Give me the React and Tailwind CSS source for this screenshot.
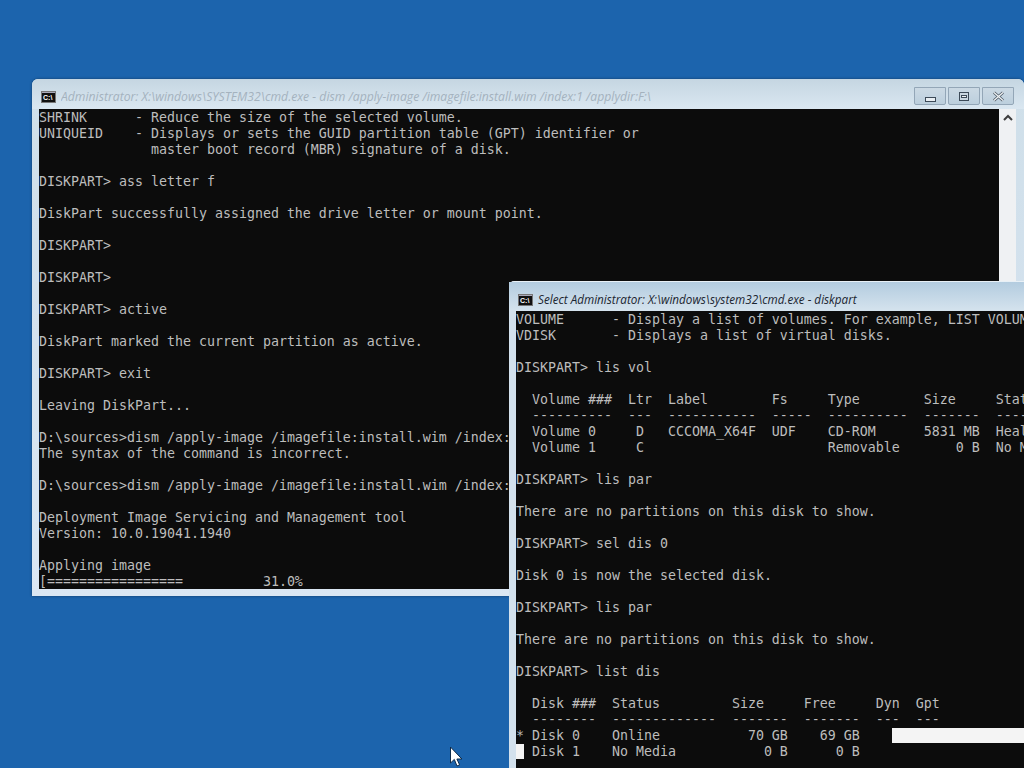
// cmd.exe windows on the Windows PE desktop
const BACK_LINES = [
  "SHRINK      - Reduce the size of the selected volume.",
  "UNIQUEID    - Displays or sets the GUID partition table (GPT) identifier or",
  "              master boot record (MBR) signature of a disk.",
  "",
  "DISKPART> ass letter f",
  "",
  "DiskPart successfully assigned the drive letter or mount point.",
  "",
  "DISKPART>",
  "",
  "DISKPART>",
  "",
  "DISKPART> active",
  "",
  "DiskPart marked the current partition as active.",
  "",
  "DISKPART> exit",
  "",
  "Leaving DiskPart...",
  "",
  "D:\\sources>dism /apply-image /imagefile:install.wim /index:",
  "The syntax of the command is incorrect.",
  "",
  "D:\\sources>dism /apply-image /imagefile:install.wim /index:",
  "",
  "Deployment Image Servicing and Management tool",
  "Version: 10.0.19041.1940",
  "",
  "Applying image",
  "[=================          31.0%",
];

const FRONT_LINES = [
  "VOLUME      - Display a list of volumes. For example, LIST VOLUME.",
  "VDISK       - Displays a list of virtual disks.",
  "",
  "DISKPART> lis vol",
  "",
  "  Volume ###  Ltr  Label        Fs     Type        Size     Status     Info",
  "  ----------  ---  -----------  -----  ----------  -------  ---------  --------",
  "  Volume 0     D   CCCOMA_X64F  UDF    CD-ROM      5831 MB  Healthy",
  "  Volume 1     C                       Removable       0 B  No Media",
  "",
  "DISKPART> lis par",
  "",
  "There are no partitions on this disk to show.",
  "",
  "DISKPART> sel dis 0",
  "",
  "Disk 0 is now the selected disk.",
  "",
  "DISKPART> lis par",
  "",
  "There are no partitions on this disk to show.",
  "",
  "DISKPART> list dis",
  "",
  "  Disk ###  Status         Size     Free     Dyn  Gpt",
  "  --------  -------------  -------  -------  ---  ---",
];

const CmdIcon = () => (
  <div className="flex h-[12px] w-[15px] shrink-0 flex-col bg-[#111] border border-[#777]">
    <div className="h-[2px] bg-[#aab]" />
    <span className="font-['Liberation_Sans',sans-serif] text-[7px] leading-[9px] font-bold text-white pl-[1px]">C:\</span>
  </div>
);

const Console = ({ children }) => (
  <pre className="pt-[1px] font-['DejaVu_Sans_Mono',monospace] text-[13.29px] leading-4 text-[#bdbdbd] whitespace-pre">
    {children}
  </pre>
);

const CaptionButton = ({ children }) => (
  <div className="flex h-[18px] w-[32px] items-center justify-center rounded-b-[2px] border border-[#93a6b7] bg-gradient-to-b from-[#cbd9e4] to-[#bccfdd]">
    {children}
  </div>
);

const App = () => (
  <div className="relative h-[768px] w-[1024px] overflow-hidden bg-[#1c64ad]">
    {/* back window */}
    <div className="absolute left-[32px] top-[79px] flex h-[517px] w-[992px] flex-col rounded-t-[6px] bg-gradient-to-b from-[#cfdfe9] via-[#d4e2ee] to-[#dbe7f3] shadow-[0_0_3px_rgba(0,0,0,0.4)]">
      <div className="flex h-[30px] items-center pl-[9px] pr-[10px] pt-[6px] bg-gradient-to-b from-[#c5d6e2] to-[#dae7f1] rounded-t-[6px]">
        <CmdIcon />
        <span className="ml-[5px] flex-1 truncate font-['Open_Sans',sans-serif] text-[12.2px] italic text-[#a4b2be]">
          Administrator: X:\windows\SYSTEM32\cmd.exe - dism /apply-image /imagefile:install.wim /index:1 /applydir:F:\
        </span>
        <div className="-mt-[2px] flex gap-[2px]">
          <CaptionButton>
            <div className="mt-[7px] h-[5px] w-[11px] border border-[#3c4a58] bg-[#e8eef3]" />
          </CaptionButton>
          <CaptionButton>
            <div className="flex h-[9px] w-[10px] items-center justify-center border border-[#3c4a58] bg-[#c9d6e0]">
              <div className="h-[3px] w-[6px] border border-[#3c4a58] bg-[#eef2f5]" />
            </div>
          </CaptionButton>
          <CaptionButton>
            <svg width="13" height="11" viewBox="0 0 13 11">
              <path d="M2 1.5 11 9.5M11 1.5 2 9.5" stroke="#4b5763" strokeWidth="3" />
              <path d="M2 1.5 11 9.5M11 1.5 2 9.5" stroke="#eef2f5" strokeWidth="1.4" />
            </svg>
          </CaptionButton>
        </div>
      </div>
      <div className="flex h-[480px] pl-[7px] pr-[8px]">
        <div className="flex-1 overflow-hidden bg-[#0c0c0c]">
          <Console>{BACK_LINES.join("\n")}</Console>
        </div>
        <div className="flex w-[17px] justify-center bg-[#eff1f3] pt-[5px]">
          <svg width="10" height="7" viewBox="0 0 10 7">
            <path d="M1 6 5 2l4 4" fill="none" stroke="#3d3d3d" strokeWidth="2" />
          </svg>
        </div>
      </div>
    </div>

    {/* front window, runs off the right and bottom edge */}
    <div className="absolute left-[509px] top-[281px] flex h-[487px] w-[515px] flex-col rounded-tl-[5px] border-t border-[#e8f0f6] bg-[#d3e1ed]">
      <div className="flex h-[29px] items-center pl-[9px] pt-[6px] bg-gradient-to-b from-[#b3ccdf] to-[#d5e3ee]">
        <CmdIcon />
        <span className="ml-[5px] font-['Open_Sans',sans-serif] text-[11.7px] italic text-[#1b2530]">
          Select Administrator: X:\windows\system32\cmd.exe - diskpart
        </span>
      </div>
      <div className="flex-1 overflow-hidden bg-[#0c0c0c] ml-[7px]">
        <Console>
          {FRONT_LINES.join("\n")}
          {"\n* Disk 0    Online           70 GB    69 GB    "}
          <span className="bg-[#f4f4f4]">{" ".repeat(20)}</span>
          {"\n"}
          <span className="bg-[#f4f4f4]"> </span>
          {" Disk 1    No Media           0 B      0 B"}
        </Console>
      </div>
    </div>

    {/* mouse pointer */}
    <svg className="absolute left-[449px] top-[746px]" width="14" height="22" viewBox="0 0 14 22">
      <path d="M1.5 1v16l3.8-3.6L8 20l2.6-1.2-2.7-5.8h5z" fill="#fff" stroke="#0b2a4a" strokeWidth="1" />
    </svg>
  </div>
);

export default App;
